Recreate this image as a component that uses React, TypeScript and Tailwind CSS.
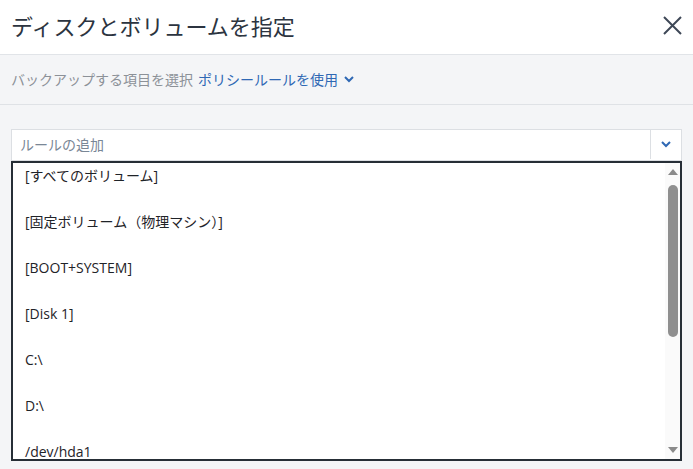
import { useState } from 'react';

const volumes = [
  '[すべてのボリューム]',
  '[固定ボリューム（物理マシン）]',
  '[BOOT+SYSTEM]',
  '[Disk 1]',
  'C:\\',
  'D:\\',
  '/dev/hda1',
];

export default function App() {
  const [selected, setSelected] = useState<string | null>(null);

  return (
    <div
      className="flex h-[469px] w-[693px] flex-col overflow-hidden bg-[#f4f5f7]"
      style={{ fontFamily: '"Open Sans", "Noto Sans CJK JP", sans-serif' }}
    >
      {/* Header */}
      <div className="flex h-[55px] shrink-0 items-center justify-between border-b border-[#e1e4e8] bg-white pb-[3px] pl-[11px] pr-[8px]">
        <h1 className="text-[22px] leading-none font-normal text-[#2c3440]">ディスクとボリュームを指定</h1>
        <button className="flex h-[26px] w-[26px] items-center justify-center text-[#3e4857]" aria-label="閉じる">
          <svg width="19" height="19" viewBox="0 0 19 19" fill="none" stroke="currentColor" strokeWidth="2">
            <path d="M1 1 L18 18 M18 1 L1 18" />
          </svg>
        </button>
      </div>

      {/* Selection mode */}
      <div className="flex h-[50px] shrink-0 items-center border-b border-[#dfe2e6] px-[11px] text-[14px]">
        <span className="text-[#8c9198]">バックアップする項目を選択</span>
        <button className="ml-[5px] flex items-center gap-[6px] text-[#2f68b4]">
          ポリシールールを使用
          <svg width="10" height="7" viewBox="0 0 10 7" fill="none" stroke="currentColor" strokeWidth="2">
            <path d="M1 1 L5 5 L9 1" />
          </svg>
        </button>
      </div>

      {/* Rules */}
      <div className="flex min-h-0 flex-1 flex-col px-[11px] pt-[24px] pb-[8px]">
        <div className="flex h-[32px] shrink-0 border border-[#dcdfe3] bg-white pb-[1px]">
          <div className="flex flex-1 items-center pl-[8px] text-[14px] text-[#7a8796]">ルールの追加</div>
          <button className="flex w-[31px] items-center justify-center border-l border-[#dcdfe3] text-[#2f68b4]">
            <svg width="10" height="7" viewBox="0 0 10 7" fill="none" stroke="currentColor" strokeWidth="2">
              <path d="M1 1 L5 5 L9 1" />
            </svg>
          </button>
        </div>

        <div className="flex min-h-0 flex-1 border-[2.5px] border-t-[2px] border-[#262e36] bg-white">
          <div className="min-w-0 flex-1 overflow-hidden">
            <ul className="-mt-[11px]">
              {volumes.map((v) => (
                <li
                  key={v}
                  onClick={() => setSelected(v)}
                  className={`flex h-[46px] items-center pl-[12px] text-[14px] text-[#1f2328] ${
                    selected === v ? 'bg-[#e6eef8]' : ''
                  }`}
                >
                  {v}
                </li>
              ))}
            </ul>
          </div>

          {/* Scrollbar */}
          <div className="flex w-[15px] shrink-0 flex-col items-center bg-[#fafafa] py-[4px]">
            <svg width="10" height="6" viewBox="0 0 10 6" className="mt-[2px] fill-[#8a8a8a]">
              <path d="M5 0 L10 6 L0 6 Z" />
            </svg>
            <div className="mt-[10px] h-[152px] w-[10px] rounded-[5px] bg-[#8f8f8f]" />
            <div className="flex-1" />
            <svg width="10" height="6" viewBox="0 0 10 6" className="mb-[2px] fill-[#8a8a8a]">
              <path d="M0 0 L10 0 L5 6 Z" />
            </svg>
          </div>
        </div>
      </div>
    </div>
  );
}
